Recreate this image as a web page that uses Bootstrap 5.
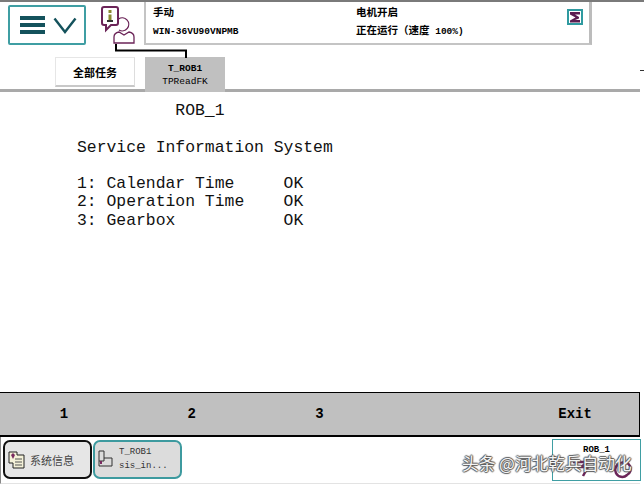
<!DOCTYPE html>
<html lang="zh"><head><meta charset="utf-8">
<link href="https://cdn.jsdelivr.net/npm/bootstrap@5.3.0/dist/css/bootstrap.min.css" rel="stylesheet">
<style>
html,body{margin:0;height:484px;width:644px;overflow:hidden;background:#fff}
.fp{position:relative;width:644px;height:484px;font-family:"Liberation Mono","Noto Sans CJK SC",monospace;color:#000}
.topb{height:45px;border-top:2px solid #7a7a7a}
.menub{width:78px;height:40px;margin:3px 0 0 8px;border:2px solid #3f9ea3;border-radius:2px;gap:8px;padding-left:10px}
.ham{width:25px;height:18px;border-top:4px solid #14525c;border-bottom:4px solid #14525c;position:relative}
.ham::after{content:"";position:absolute;left:0;right:0;top:3px;height:4px;background:#14525c}
.icoi{margin-left:14px;margin-top:3px;width:36px;height:40px}
.stat{width:448px;height:43px;margin-left:8px;border-left:2px solid #c4c4c4;border-right:3px solid #bcbcbc;border-bottom:2px solid #c4c4c4;padding:0 0 0 7px;font-size:9.5px;font-weight:700}
.stc1{width:203px}.stc2{width:211px}
.stl{height:14px;line-height:14px;margin-top:5px;white-space:nowrap}
.stl+.stl{margin-top:4px}
.stl i{font:700 10.5px/1 "Noto Sans CJK SC",sans-serif;font-style:normal}
.sti{margin-top:7px}
.tabs{height:47px;padding:12px 0 0 55px;border-bottom:3px solid #a9a9a9;width:640px;gap:10px;align-items:flex-end}
.tab1{width:80px;height:30px;margin-bottom:2px;border:1px solid #e6e6e6;border-bottom:2px solid #c8c8c8;border-right-color:#ddd;font:700 11px/28px "Noto Sans CJK SC",sans-serif;text-align:center}
.tab2{width:80px;height:35px;margin-bottom:-3px;background:#c0c0c0;font-size:9.5px;line-height:13px;text-align:center;padding-top:5px}
.tab2 b{display:block}
.bodyt{flex:1 1 auto;margin:0;padding:10.300px 0 0 77px;font:16.4px/18.2px "Liberation Mono",monospace;white-space:pre;color:#111;background:transparent;overflow:hidden}
.fnb{height:45px;width:640px;background:#c0c0c0;border:solid #000;border-width:1px 1px 2px 0;font:700 14px/43px "Liberation Mono",monospace}
.fnb>div{width:128px;text-align:center}
.task{height:47px;width:640px;border-left:1px solid #888;padding:3px 0 0 2px;gap:1px;position:relative;border-bottom:1px solid #e3e3e3}
.tk1,.tk2{width:89px;height:39px;border-radius:7px;background:#e6e6e6;border:2px solid #111;display:flex;align-items:center;padding-left:3px}
.tk2{border:2px solid #3d9a9f;background:#dcdcdc;font-size:9px;line-height:14px}
.tk1 span{font:11px "Noto Sans CJK SC",sans-serif;margin-left:5px;color:#444}
.tk2 span{margin-left:6px;color:#333;margin-top:-2px}
.rob{position:absolute;left:551px;top:2px;width:89px;height:42px;border:1px solid #3f9ea3;font:700 9px/12px "Liberation Mono",monospace;text-align:center;padding-top:4px}
.rob svg{display:block;position:absolute;left:12px;top:14px}
.conn{position:absolute;left:114px;top:44px}
.tick{position:absolute;left:640px;top:70px;width:4px;height:1px;background:#333}
.wm{position:absolute;left:462px;top:452px;font:16.7px/22px "Noto Sans CJK SC",sans-serif;color:#f4f4f4;white-space:nowrap;text-shadow:1px 0 1px #555,-1px 0 1px #555,0 1px 1px #555,0 -1px 1px #555}
</style></head><body>
<div class="fp d-flex flex-column">
 <div class="topb d-flex">
  <div class="menub d-flex align-items-center">
   <div class="ham"></div>
   <svg width="24" height="17" viewBox="0 0 24 17"><path d="M1.500 1.500 12 15 22.500 1.500" fill="none" stroke="#14525c" stroke-width="2.400"/></svg>
  </div>
  <svg class="icoi" viewBox="0 0 36 40">
   <path d="M2 4Q2 2 4 2H16Q18 2 18 4V18Q18 20 16 20H11L6 25V20H4Q2 20 2 18Z" fill="#fff" stroke="#6b2458" stroke-width="2"/>
   <rect x="8.500" y="5" width="3" height="3" fill="#8a8a30"/><rect x="8.500" y="9.500" width="3" height="6" fill="#8a8a30"/><rect x="7" y="15" width="6" height="2" fill="#333"/>
   <path d="M18.500 14A6.500 6.500 0 1 1 19 25" fill="none" stroke="#6b2458" stroke-width="1.300"/>
   <path d="M14 38V32Q14 28 19 27L24 30 29 27Q34 28 34 32V38Z" fill="#fff" stroke="#6b2458" stroke-width="1.300"/>
  </svg>
  <div class="stat d-flex">
   <div class="stc1"><div class="stl"><i>手动</i></div><div class="stl">WIN-36VU90VNPMB</div></div>
   <div class="stc2"><div class="stl"><i>电机开启</i></div><div class="stl"><i>正在运行（速度</i> 100%)</div></div>
   <svg class="sti" width="16" height="16" viewBox="0 0 16 16"><rect width="16" height="16" fill="#2f9aa0"/><rect x="2" y="2" width="12" height="12" fill="#fff"/><path d="M3 3H13V5.500H8L12 8V9.500L8 11H13V13.500H3V11.500L8.500 8.500 3 5.500Z" fill="#5a1d50"/></svg>
  </div>
 </div>
 <div class="tabs d-flex">
  <div class="tab1">全部任务</div>
  <div class="tab2"><b>T_ROB1</b>TPReadFK</div>
 </div>
 <pre class="bodyt">          ROB_1

Service Information System

1: Calendar Time     OK
2: Operation Time    OK
3: Gearbox           OK</pre>
 <div class="fnb d-flex">
  <div>1</div><div>2</div><div>3</div><div></div><div>Exit</div>
 </div>
 <div class="task d-flex">
  <div class="tk1">
   <svg width="17" height="19" viewBox="0 0 17 19"><path d="M1 2H9V5H16V18H5V13H1Z" fill="#f4f1d8" stroke="#222"/><path d="M7 9H14M7 12H14M7 15H14" stroke="#555"/><path d="M3 5 5 3 7 5 5 9Z" fill="#7a2a60"/></svg>
   <span>系统信息</span></div>
  <div class="tk2">
   <svg width="15" height="19" viewBox="0 0 15 19"><path d="M1 1H6V11H1ZM6 8H14V16H1V11" fill="none" stroke="#333"/><path d="M3 11V14" stroke="#7a2a60" stroke-width="2"/></svg>
   <span>T_ROB1<br>sis_in...</span></div>
  <div class="rob">ROB_1
   <svg width="72" height="26" viewBox="0 0 72 26"><path d="M8 8H23L16 13H23L18 22" fill="none" stroke="#6b2458" stroke-width="2.500"/><path d="M56 9a7 7 0 1 0 6 12 6 6 0 1 0-6-12" fill="none" stroke="#6b2458" stroke-width="2.500"/></svg>
  </div>
 </div>
 <svg class="conn" width="76" height="14" viewBox="0 0 76 14"><path d="M2 0V6.500H72V14" fill="none" stroke="#000" stroke-width="2"/></svg>
 <div class="tick"></div>
 <div class="wm">头条 @河北乾兵自动化</div>
</div>
</body></html>
